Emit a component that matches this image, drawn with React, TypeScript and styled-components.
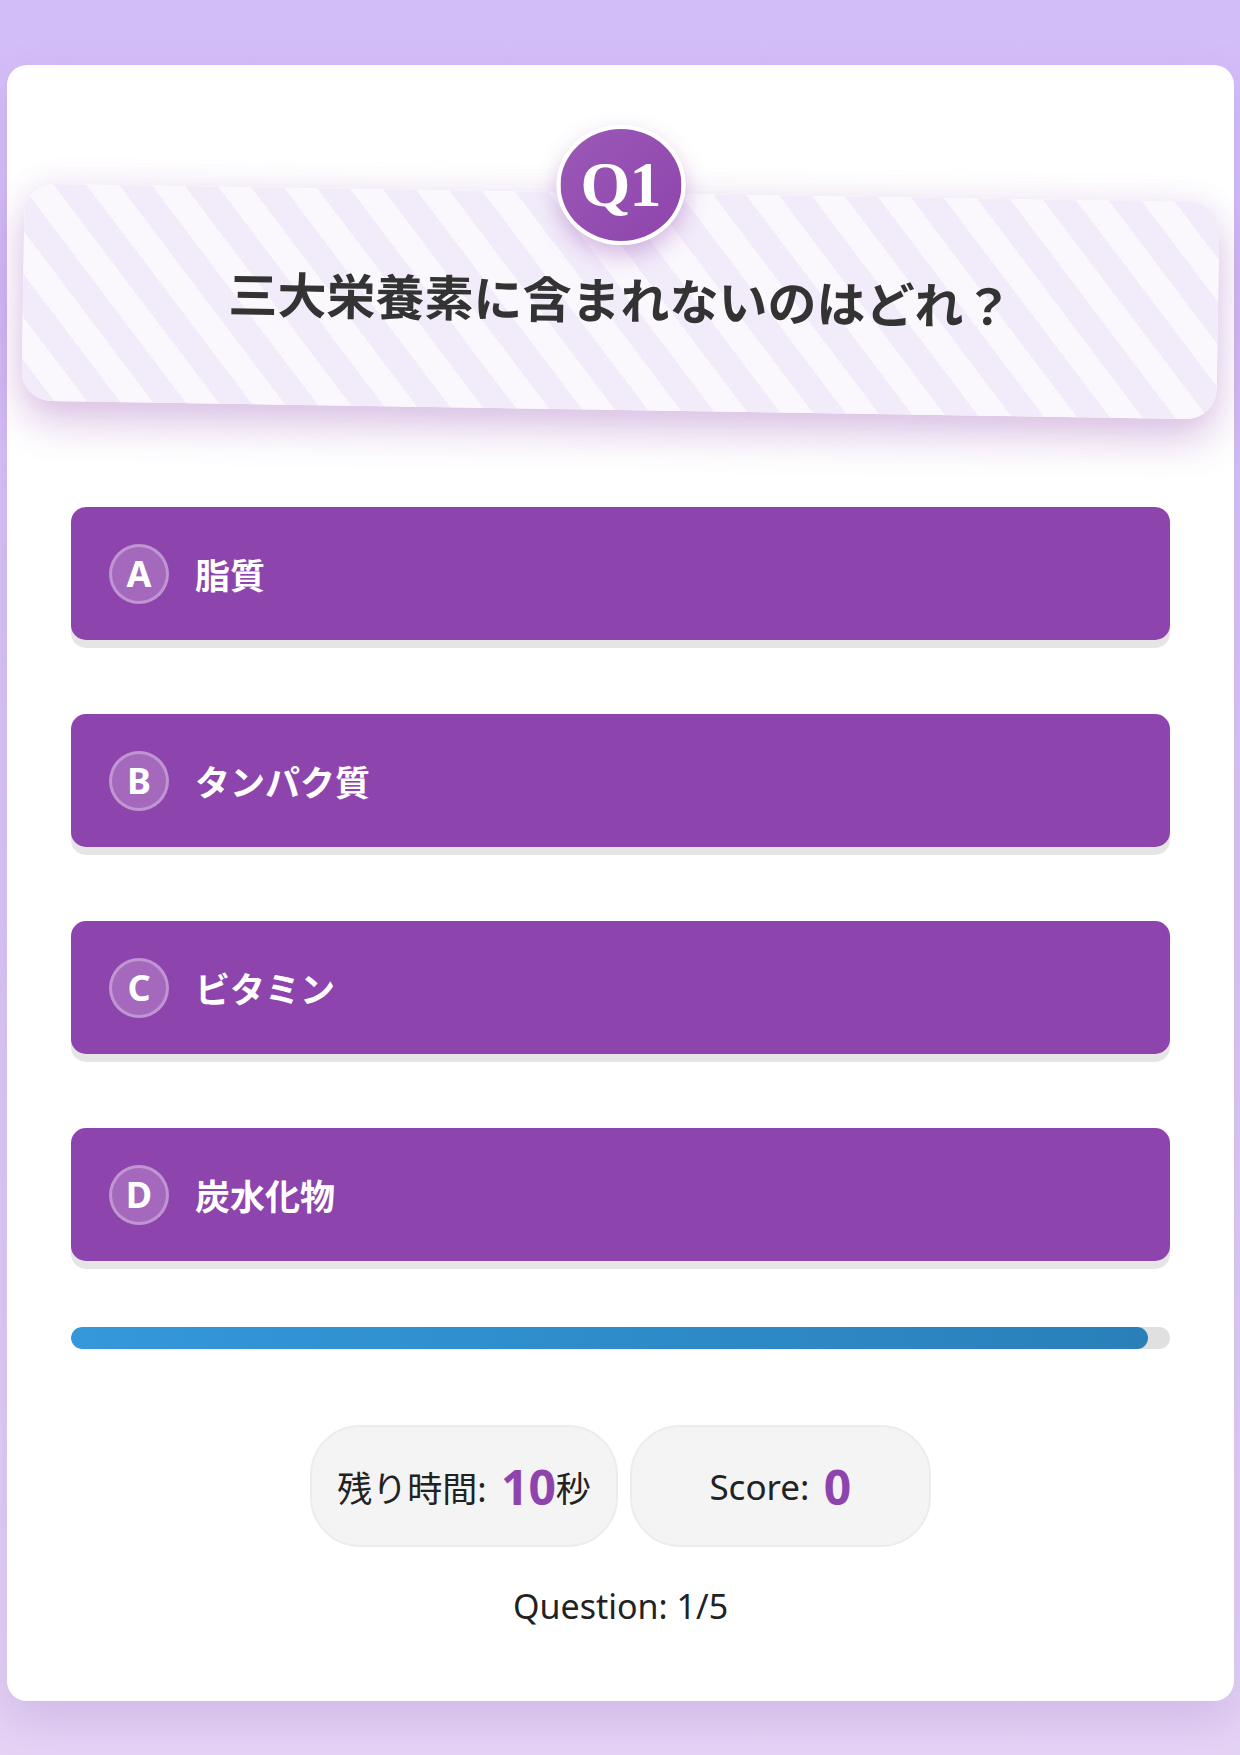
import React from "react";
import styled, { createGlobalStyle } from "styled-components";

const GlobalStyle = createGlobalStyle`
  html, body {
    margin: 0;
    padding: 0;
  }
  body {
    min-height: 100vh;
    background: linear-gradient(180deg, #d3bdf8 0%, #dcc8f6 55%, #e5d3f4 100%);
    font-family: "Noto Sans", "Noto Sans CJK JP", sans-serif;
    color: #333;
  }
  * { box-sizing: border-box; }
`;

const Page = styled.div`
  padding: 65px 6px 53px 7px;
`;

const Card = styled.div`
  background: #fff;
  border-radius: 20px;
  padding: 60px 64px 74px 64px;
  box-shadow: 0 18px 45px rgba(120, 70, 170, 0.18);
  display: flex;
  flex-direction: column;
`;

const QuestionWrap = styled.div`
  position: relative;
  padding-top: 68px;
`;

const Badge = styled.div`
  position: absolute;
  top: 0;
  left: 50%;
  transform: translateX(-50%);
  width: 129px;
  height: 120px;
  border-radius: 50%;
  border: 4px solid #fff;
  background: linear-gradient(135deg, #9b59b6 0%, #8e44ad 100%);
  box-shadow: 0 10px 22px rgba(142, 68, 173, 0.35);
  display: flex;
  align-items: center;
  justify-content: center;
  color: #fff;
  font-family: "Liberation Serif", "DejaVu Serif", serif;
  font-weight: 700;
  font-size: 64px;
  letter-spacing: -1px;
  z-index: 2;
`;

const Banner = styled.div`
  margin: 0 -48px;
  border-radius: 30px;
  padding: 78px 40px 86px;
  transform: rotate(0.9deg);
  background: repeating-linear-gradient(
    52deg,
    #f2ecfa 0px,
    #f2ecfa 26px,
    #faf7fd 26px,
    #faf7fd 52px
  );
  box-shadow: 0 20px 40px rgba(142, 68, 173, 0.32), 0 -6px 30px rgba(142, 68, 173, 0.06);
`;

const QuestionText = styled.h2`
  margin: 0;
  text-align: center;
  font-family: "Noto Sans CJK JP", "Noto Sans", sans-serif;
  font-weight: 700;
  font-size: 49px;
  line-height: 53px;
  color: #333;
`;

const Options = styled.div`
  margin-top: 97px;
  display: flex;
  flex-direction: column;
  gap: 74px;
`;

const OptionButton = styled.button`
  display: flex;
  align-items: center;
  gap: 26px;
  height: 133px;
  padding: 0 38px;
  border: none;
  border-radius: 15px;
  background: #8e44ad;
  box-shadow: 0 8px 0 rgba(0, 0, 0, 0.1);
  color: #fff;
  cursor: pointer;
  text-align: left;
  font-family: "Noto Sans CJK JP", "Noto Sans", sans-serif;
`;

const Letter = styled.span`
  width: 60px;
  height: 60px;
  flex: none;
  border-radius: 50%;
  border: 3px solid rgba(255, 255, 255, 0.3);
  background: rgba(255, 255, 255, 0.2);
  display: flex;
  align-items: center;
  justify-content: center;
  font-family: "Noto Sans", sans-serif;
  font-weight: 700;
  font-size: 36px;
  line-height: 1;
`;

const Label = styled.span`
  font-weight: 700;
  font-size: 35px;
  line-height: 1;
`;

const Track = styled.div`
  margin-top: 66px;
  height: 22px;
  border-radius: 11px;
  background: #e0e0e0;
  overflow: hidden;
`;

const Fill = styled.div`
  height: 100%;
  border-radius: 11px;
  background: linear-gradient(90deg, #3498db 0%, #2980b9 100%);
`;

const Stats = styled.div`
  margin-top: 76px;
  display: flex;
  justify-content: center;
  gap: 12px;
`;

const Pill = styled.div`
  min-width: 301px;
  height: 122px;
  padding: 0 25px;
  border-radius: 50px;
  border: 2px solid #ececec;
  background: #f4f4f4;
  display: flex;
  align-items: center;
  justify-content: center;
  font-size: 35px;
  color: #222;
  white-space: nowrap;
`;

const Value = styled.span`
  color: #8e44ad;
  font-weight: 700;
  font-size: 48px;
  font-family: "Noto Sans", sans-serif;
  margin-left: 0.3em;
`;

const Counter = styled.div`
  margin-top: 39px;
  text-align: center;
  font-size: 34px;
  line-height: 41px;
  color: #222;
`;

const options = [
  { key: "A", text: "脂質" },
  { key: "B", text: "タンパク質" },
  { key: "C", text: "ビタミン" },
  { key: "D", text: "炭水化物" },
];

export default function App() {
  const progress = 98;
  return (
    <>
      <GlobalStyle />
      <Page>
        <Card>
          <QuestionWrap>
            <Badge>Q1</Badge>
            <Banner>
              <QuestionText>三大栄養素に含まれないのはどれ？</QuestionText>
            </Banner>
          </QuestionWrap>
          <Options>
            {options.map((o) => (
              <OptionButton key={o.key}>
                <Letter>{o.key}</Letter>
                <Label>{o.text}</Label>
              </OptionButton>
            ))}
          </Options>
          <Track>
            <Fill style={{ width: `${progress}%` }} />
          </Track>
          <Stats>
            <Pill>
              残り時間:<Value>10</Value>秒
            </Pill>
            <Pill>
              Score:<Value>0</Value>
            </Pill>
          </Stats>
          <Counter>Question: 1/5</Counter>
        </Card>
      </Page>
    </>
  );
}
